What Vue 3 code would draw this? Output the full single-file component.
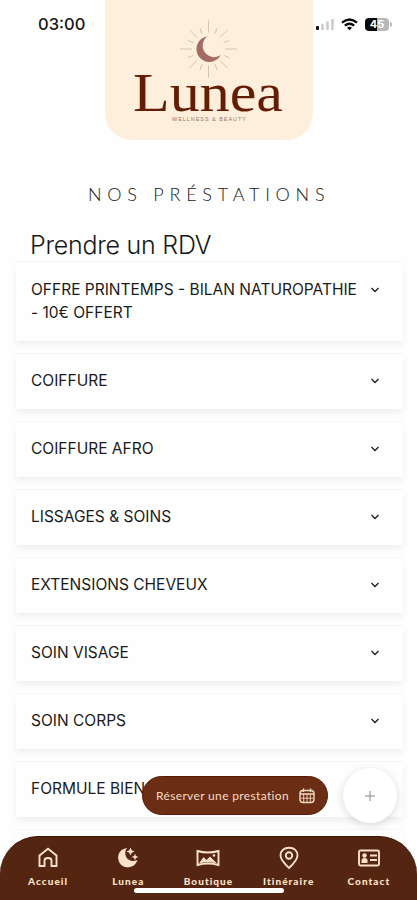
<template>
  <main class="screen">
    <header class="header">
      <time class="clock">03:00</time>
      <div class="brand">
        <svg class="logo" viewBox="0 0 208 140" aria-label="Lunea">
          <g class="rays">
            <path v-for="ray in rays" :key="ray.angle" :d="ray.path" :transform="`translate(103.5 49) rotate(${ray.angle})`" />
          </g>
          <path class="moon" d="M102.500 36.300A12.900 12.900 0 1 0 115.800 55A10.600 10.600 0 1 1 102.500 36.300Z" />
          <text class="wordmark" x="28" y="111" textLength="150" lengthAdjust="spacingAndGlyphs">Lunea</text>
          <text class="tagline" x="67" y="121" textLength="74">WELLNESS &amp; BEAUTY</text>
        </svg>
      </div>
      <div class="status">
        <svg class="signal" width="20" height="14" viewBox="0 0 20 14">
          <rect x="0" y="9" width="3" height="4" rx="1" fill="#111" />
          <path d="M6.500 12V8M11.500 12V5.500M16.500 12V3" stroke="#ccc" stroke-width="2.600" stroke-linecap="round" />
        </svg>
        <svg class="wifi" width="17" height="13" viewBox="0 0 17 13" fill="none" stroke="#080808" stroke-width="2.200">
          <path d="M1 4.700Q8.500-1.700 16 4.700M3.800 7.700Q8.500 3.800 13.200 7.700" />
          <path d="M6 9.800Q8.500 7.900 11 9.800L8.500 12.200Z" fill="#080808" stroke="none" />
        </svg>
        <span class="battery">45</span>
      </div>
    </header>

    <h1>NOS PRÉSTATIONS</h1>
    <h2>Prendre un RDV</h2>

    <section class="services">
      <button v-for="service in services" :key="service" class="service">
        <span>{{ service }}</span>
        <svg width="10" height="6" viewBox="0 0 10 6"><path d="M1.500 1L5 4.500L8.500 1" /></svg>
      </button>
    </section>

    <button class="booking">
      <span>Réserver une prestation</span>
      <svg width="16" height="16" viewBox="0 0 16 16">
        <rect x="1" y="2.500" width="14" height="12" rx="3" />
        <path d="M4.500 .5V4M11.500 .5V4M1 6H15" />
        <path class="grid" d="M2 10.200H14M4.700 6V14M8 6V14M11.300 6V14" />
      </svg>
    </button>
    <button class="add" aria-label="Ajouter">
      <svg width="12" height="12" viewBox="0 0 12 12"><path d="M6 1V11M1 6H11" /></svg>
    </button>

    <nav class="nav">
      <a v-for="item in navItems" :key="item.label" class="nav-item">
        <svg width="24" height="24" viewBox="0 0 24 24">
          <template v-if="item.icon === 'home'">
            <path d="M3.500 9.500L12 2.800L20.500 9.500V20H15.500V14.500Q15.500 12 12 12T8.500 14.500V20H3.500Z" />
          </template>
          <template v-else-if="item.icon === 'moon'">
            <path class="solid" d="M11 2C5 3 1.800 7 2.200 12.500C2.800 18.500 7 21.500 12.500 21.300C17 21 20.500 18 21.300 14C16.500 16 12 14.500 10.200 11C8.700 8 9 4.500 11 2Z" />
            <path class="solid" d="M14.500 1.500L15.700 4.300L18.500 5.500L15.700 6.700L14.500 9.500L13.300 6.700L10.500 5.500L13.300 4.300ZM19 7.500L19.900 10.100L22.500 11L19.900 11.900L19 14.500L18.100 11.900L15.500 11L18.100 10.100Z" />
          </template>
          <template v-else-if="item.icon === 'panorama'">
            <path d="M1.500 5Q12 8 22.500 5V19Q12 16 1.500 19Z" />
            <path class="solid" d="M3 17.500L7.500 11L10.500 14L14 10.500L21 17.500Q12 15 3 17.500Z" />
            <circle class="solid" cx="18" cy="9.500" r="1.300" />
          </template>
          <template v-else-if="item.icon === 'pin'">
            <path d="M12 22Q3.500 14 3.500 9.500C3.500 4.500 7.300 1.800 12 1.800S20.500 4.500 20.500 9.500Q20.500 14 12 22Z" />
            <circle cx="12" cy="9.500" r="3.200" />
          </template>
          <template v-else>
            <rect x="2" y="4.500" width="20" height="15" rx="1.500" />
            <circle class="solid" cx="7.500" cy="9.500" r="2.200" />
            <path class="solid" d="M4.500 17V14.500Q4.500 12 7.500 12T10.500 14.500V17Z" />
            <path d="M13 9.500H20M13 14H20" />
          </template>
        </svg>
        <span>{{ item.label }}</span>
      </a>
      <i class="home-indicator"></i>
    </nav>
  </main>
</template>

<script setup>
const services = [
  'OFFRE PRINTEMPS - BILAN NATUROPATHIE - 10€ OFFERT',
  'COIFFURE',
  'COIFFURE AFRO',
  'LISSAGES & SOINS',
  'EXTENSIONS CHEVEUX',
  'SOIN VISAGE',
  'SOIN CORPS',
  'FORMULE BIEN',
  '',
]

const navItems = [
  { label: 'Accueil', icon: 'home' },
  { label: 'Lunea', icon: 'moon' },
  { label: 'Boutique', icon: 'panorama' },
  { label: 'Itinéraire', icon: 'pin' },
  { label: 'Contact', icon: 'contact' },
]

// Cardinal rays are longer than the ones in between.
const rays = Array.from({ length: 16 }, (_, i) => {
  const outer = i % 4 === 0 ? 28.5 : i % 2 === 0 ? 27 : 22.5
  return { angle: i * 22.5, path: `M0 -16.5V-${outer}` }
})
</script>

<style>
body {
  background: #fefefe;
}
</style>

<style scoped>
.screen {
  position: relative;
  height: 900px;
  overflow: hidden;
  background: #fefefe;
  color: #171717;
  font-family: Inter, sans-serif;
}

button {
  border: 0;
  font: inherit;
}

.header {
  display: grid;
  grid-template-columns: 105px 208px 104px;
  height: 140px;
}

.clock {
  padding: 14px 0 0 38px;
  font-size: 16.5px;
  line-height: 21px;
  font-weight: 450;
}

.brand {
  border-radius: 0 0 27px 27px;
  background: #feefdc;
}

.logo {
  display: block;
  width: 208px;
  height: 140px;
}

.rays {
  fill: none;
  stroke: #d3bda9;
  stroke-width: .9;
}

.moon { fill: #a66b61; }

.wordmark {
  fill: #641d05;
  font: 54px 'Liberation Serif', serif;
}

.tagline {
  fill: #967563;
  font: 5.5px 'Liberation Sans', sans-serif;
}

.status {
  display: flex;
  align-items: center;
  align-self: start;
  height: 20px;
  margin-top: 14px;
  padding-left: 3px;
}

.wifi { margin-left: 5px; }

.battery {
  position: relative;
  width: 24px;
  height: 13px;
  margin-left: 7px;
  border-radius: 4px;
  background: linear-gradient(90deg, #080808 48%, #b8b8b8 48%);
  color: #fff;
  font-size: 11px;
  line-height: 13px;
  font-weight: 700;
  text-align: center;
}

.battery::after {
  position: absolute;
  top: 4px;
  right: -3px;
  width: 2px;
  height: 5px;
  border-radius: 0 2px 2px 0;
  background: #bbb;
  content: '';
}

h1 {
  margin: 42px 0 0 88px;
  font: 300 18px/24px Lato, sans-serif;
  letter-spacing: 5.75px;
  white-space: nowrap;
}

h2 {
  margin: 24px 0 0 30px;
  font-size: 25px;
  line-height: 31px;
  font-weight: 350;
  letter-spacing: -.25px;
}

.services {
  display: grid;
  gap: 12px;
  margin: 0 14px 0 16px;
}

.service {
  display: flex;
  align-items: center;
  justify-content: space-between;
  min-height: 56px;
  padding: 0 23px 2px 15px;
  border-top: 1px solid #f5f5f5;
  background: #fefefe;
  box-shadow: 0 4px 7px rgba(0, 0, 0, .06);
  color: #1b1b1b;
  font-size: 15.5px;
  line-height: 23px;
  text-align: left;
}

.service:first-child {
  min-height: 80px;
  align-items: flex-start;
  padding-top: 16px;
}

.service span { max-width: 332px; }

.service svg {
  flex: none;
  fill: none;
  stroke: #222;
  stroke-width: 1.4;
}

.service:first-child svg { margin-top: 9px; }

.booking {
  position: absolute;
  top: 776px;
  left: 142px;
  display: flex;
  align-items: center;
  justify-content: space-between;
  width: 186px;
  height: 39px;
  padding: 0 12px 0 13px;
  border: 1px solid #5b1a09;
  border-radius: 20px;
  background: #6b2e14;
  color: #f6dcc5;
  font: 12px Lato, sans-serif;
  letter-spacing: .35px;
  white-space: nowrap;
}

.booking svg {
  fill: none;
  stroke: #f6dcc5;
  stroke-width: 1.4;
}

.booking .grid { stroke-width: .9; }

.add {
  position: absolute;
  top: 768px;
  left: 343px;
  display: grid;
  place-items: center;
  width: 54px;
  height: 55px;
  padding: 0;
  border-radius: 50%;
  background: #fff;
  box-shadow: 0 2px 10px rgba(0, 0, 0, .14);
}

.add svg {
  stroke: #888;
  stroke-width: 1;
}

.nav {
  position: absolute;
  right: 0;
  bottom: 0;
  left: 0;
  display: grid;
  grid-template-columns: repeat(5, 1fr);
  height: 64px;
  box-sizing: border-box;
  padding: 9px 8px 0;
  border-top: 1px solid #421005;
  border-radius: 38px 38px 0 0;
  background: #542511;
  color: #fde2c7;
}

.nav-item {
  display: flex;
  flex-direction: column;
  align-items: center;
  font: 900 10px/13px Lato, sans-serif;
  letter-spacing: 1.05px;
}

.nav-item svg {
  margin-bottom: 5px;
  fill: none;
  stroke: #fde2c7;
  stroke-width: 1.9;
}

.nav-item .solid {
  fill: #fde2c7;
  stroke: none;
}

.home-indicator {
  position: absolute;
  bottom: 7px;
  left: 134px;
  width: 150px;
  height: 5px;
  border-radius: 3px;
  background: #fff;
}
</style>
